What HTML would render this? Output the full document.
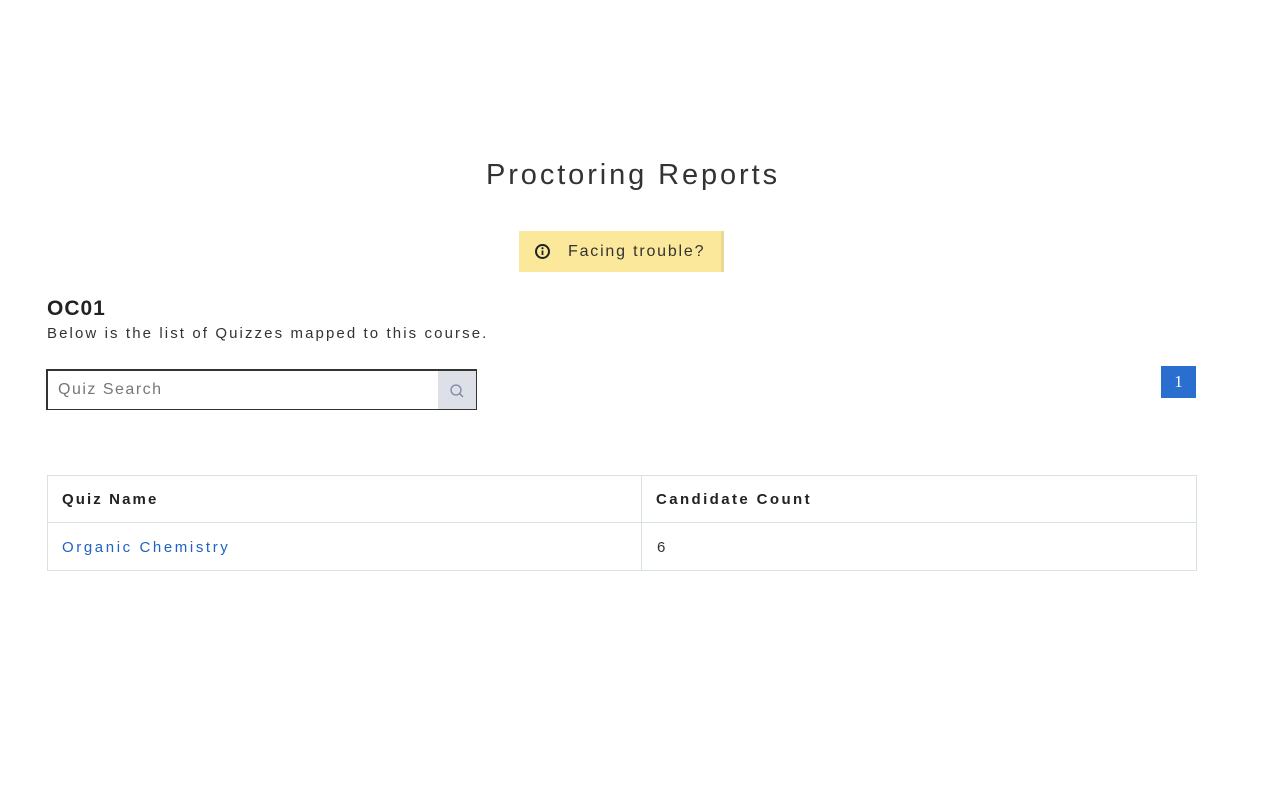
<!DOCTYPE html>
<html><head><style>
body{margin:0;width:1280px;height:800px;background:#fff;font-family:"Liberation Sans",sans-serif;color:#222;position:relative;overflow:hidden}
.a{position:absolute}
</style></head><body>
<div class="a" style="left:0;width:1266px;top:159px;text-align:center;font-size:29px;letter-spacing:2.9px;color:#333">Proctoring Reports</div>
<div class="a" style="left:519px;top:231px;width:205px;height:41px;background:#fbe89a;border-right:3px solid #e8d890;box-sizing:border-box"></div>
<svg class="a" style="left:534px;top:243px" width="17" height="17" viewBox="0 0 17 17"><circle cx="8.5" cy="8.5" r="6.5" fill="none" stroke="#222" stroke-width="2"/><rect x="7.6" y="7.5" width="1.8" height="4.5" fill="#222"/><circle cx="8.5" cy="5.2" r="1.1" fill="#222"/></svg>
<div class="a" style="left:568px;top:243px;font-size:16px;letter-spacing:1.8px;color:#333">Facing trouble?</div>
<div class="a" style="left:47px;top:297px;font-size:21px;font-weight:bold;letter-spacing:1px;color:#222">OC01</div>
<div class="a" style="left:47px;top:325px;font-size:15px;letter-spacing:2.1px;color:#333">Below is the list of Quizzes mapped to this course.</div>
<div class="a" style="left:46px;top:369px;width:431px;height:41px;border:1px solid #333;border-top-width:2px;border-left-width:2px;box-sizing:border-box"></div>
<div class="a" style="left:438px;top:371px;width:38px;height:38px;background:#dde0e6"></div>
<svg class="a" style="left:449px;top:383px" width="16" height="16" viewBox="0 0 16 16"><circle cx="7" cy="7" r="5" fill="none" stroke="#7a86aa" stroke-width="1.3"/><line x1="10.5" y1="10.5" x2="14" y2="14" stroke="#7a86aa" stroke-width="1.3"/></svg>
<div class="a" style="left:58px;top:381px;font-size:16px;letter-spacing:1.5px;color:#777">Quiz Search</div>
<div class="a" style="left:1161px;top:366px;width:35px;height:32px;background:#2a6fd0;color:#fff;font-family:'Liberation Serif',serif;font-size:17px;text-align:center;line-height:32px">1</div>
<div class="a" style="left:47px;top:475px;width:1150px;height:96px;border:1px solid #d8e2e6;box-sizing:border-box"></div>
<div class="a" style="left:47px;top:522px;width:1150px;height:1px;background:#d8e2e6"></div>
<div class="a" style="left:641px;top:475px;width:1px;height:96px;background:#d8e2e6"></div>
<div class="a" style="left:62px;top:491px;font-size:15px;font-weight:bold;letter-spacing:2.1px">Quiz Name</div>
<div class="a" style="left:656px;top:491px;font-size:15px;font-weight:bold;letter-spacing:2.4px">Candidate Count</div>
<div class="a" style="left:62px;top:539px;font-size:15px;letter-spacing:2.6px;color:#1f62c4">Organic Chemistry</div>
<div class="a" style="left:657px;top:539px;font-size:15px;color:#333">6</div>
</body></html>
